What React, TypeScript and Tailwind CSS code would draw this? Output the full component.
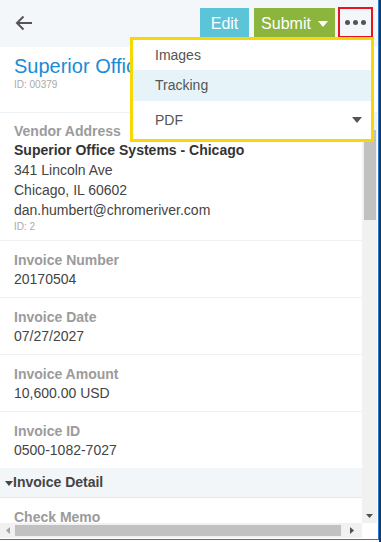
import React from "react";

const font = { fontFamily: '"Liberation Sans", Arial, sans-serif' };

function Field({ label, value }: { label: string; value: string }) {
  return (
    <div className="pl-[14px] pt-[10px] pb-[8px] border-b border-[#eef1f4]">
      <div className="text-[14px] leading-[18px] font-bold text-[#9b9b9b]">{label}</div>
      <div className="text-[14px] leading-[20px] text-[#444]">{value}</div>
    </div>
  );
}

export default function App() {
  return (
    <div className="w-[381px] h-[542px] bg-white flex overflow-hidden" style={font}>
      <div className="w-[379px] h-[540px] relative flex flex-col border-r border-b border-[#2b78d0] bg-white shrink-0">
        {/* Header */}
        <div className="h-[47px] bg-[#f4f7fa] flex items-start shrink-0">
          <div className="pl-[15px] pt-[15px]">
            <svg width="18" height="16" viewBox="0 0 18 16" fill="none" stroke="#555" strokeWidth="2">
              <path d="M17 8H2" />
              <path d="M8.5 1.5L2 8l6.5 6.5" />
            </svg>
          </div>
          <div className="ml-auto flex items-start pt-[8px] pr-[5px]">
            <div className="w-[49px] h-[31px] bg-[#5bc4d9] text-white text-[16px] flex items-center justify-center">
              Edit
            </div>
            <div className="ml-[5px] w-[81px] h-[31px] bg-[#8bb53c] text-white text-[16px] flex items-center justify-center gap-[7px]">
              <span>Submit</span>
              <svg width="10" height="6" viewBox="0 0 10 6"><path d="M0 0h10L5 6z" fill="#fff" /></svg>
            </div>
            <div className="ml-[3px] -mt-[1px] w-[35px] h-[31px] border-2 border-[#e8141c] flex items-center justify-center gap-[3px]">
              <span className="w-[5px] h-[5px] rounded-full bg-[#555]" />
              <span className="w-[5px] h-[5px] rounded-full bg-[#555]" />
              <span className="w-[5px] h-[5px] rounded-full bg-[#555]" />
            </div>
          </div>
        </div>

        {/* Title */}
        <div className="h-[66px] shrink-0 pl-[14px] pt-[7px] border-b border-[#eef1f4]">
          <div className="text-[20px] leading-[24px] text-[#1a8bd6]">Superior Office Systems - Chicago</div>
          <div className="text-[10px] leading-[14px] text-[#aaa]">ID: 00379</div>
        </div>

        {/* Scroll area */}
        <div className="flex h-[410px] shrink-0">
          <div className="w-[362px] overflow-hidden">
            <div className="pl-[14px] pt-[9px] pb-[6px] border-b border-[#eef1f4]">
              <div className="text-[14px] leading-[18px] font-bold text-[#9b9b9b]">Vendor Address</div>
              <div className="text-[14px] leading-[20px] font-bold text-[#333]">Superior Office Systems - Chicago</div>
              <div className="text-[14px] leading-[20px] text-[#444]">341 Lincoln Ave</div>
              <div className="text-[14px] leading-[20px] text-[#444]">Chicago, IL 60602</div>
              <div className="text-[14px] leading-[20px] text-[#444]">dan.humbert@chromeriver.com</div>
              <div className="text-[10px] leading-[14px] text-[#aaa]">ID: 2</div>
            </div>
            <Field label="Invoice Number" value="20170504" />
            <Field label="Invoice Date" value="07/27/2027" />
            <Field label="Invoice Amount" value="10,600.00 USD" />
            <div className="pl-[14px] pt-[10px] pb-[8px]">
              <div className="text-[14px] leading-[18px] font-bold text-[#9b9b9b]">Invoice ID</div>
              <div className="text-[14px] leading-[20px] text-[#444]">0500-1082-7027</div>
            </div>
            <div className="h-[30px] bg-[#f2f6f9] border-b border-[#e3e8ec] flex items-center pl-[5px]">
              <svg width="8" height="5" viewBox="0 0 8 5" className="mt-[2px]"><path d="M0 0h8L4 5z" fill="#444" /></svg>
              <span className="text-[14px] font-bold text-[#444]">Invoice Detail</span>
            </div>
            <div className="pl-[14px] pt-[10px]">
              <div className="text-[14px] leading-[18px] font-bold text-[#9b9b9b]">Check Memo</div>
            </div>
          </div>
          {/* vertical scrollbar */}
          <div className="w-[15px] bg-[#f1f1f1] flex flex-col">
            <div className="h-[15px] flex items-center justify-center">
              <svg width="7" height="4" viewBox="0 0 7 4"><path d="M0 4h7L3.5 0z" fill="#a3a3a3" /></svg>
            </div>
            <div className="mt-[2px] ml-[2px] mr-[1px] h-[90px] bg-[#c1c1c1]" />
            <div className="mt-auto h-[15px] flex items-center justify-center">
              <svg width="7" height="4" viewBox="0 0 7 4"><path d="M0 0h7L3.5 4z" fill="#505050" /></svg>
            </div>
          </div>
        </div>

        {/* horizontal scrollbar */}
        <div className="flex h-[15px] shrink-0">
          <div className="w-[362px] bg-[#f1f1f1] flex items-center">
            <div className="w-[15px] flex items-center justify-center">
              <svg width="4" height="7" viewBox="0 0 4 7"><path d="M4 0v7L0 3.5z" fill="#a3a3a3" /></svg>
            </div>
            <div className="h-[11px] w-[326px] bg-[#c1c1c1]" />
            <div className="flex-1 flex items-center justify-center">
              <svg width="4" height="7" viewBox="0 0 4 7"><path d="M0 0v7L4 3.5z" fill="#505050" /></svg>
            </div>
          </div>
          <div className="w-[15px] bg-white" />
        </div>

        {/* Dropdown menu */}
        <div className="absolute left-[130px] top-[37px] w-[244px] h-[105px] border-[3px] border-[#f7d708] bg-white text-[14px] text-[#555]">
          <div className="h-[30px] flex items-center pl-[22px]">Images</div>
          <div className="h-[31px] flex items-center pl-[22px] bg-[#e6f4f9]">Tracking</div>
          <div className="h-[38px] flex items-center pl-[22px] pr-[9px] justify-between">
            <span>PDF</span>
            <svg width="10" height="6" viewBox="0 0 10 6"><path d="M0 0h10L5 6z" fill="#555" /></svg>
          </div>
        </div>
      </div>
      <div className="flex-1 h-full bg-[#123a66]" />
    </div>
  );
}
